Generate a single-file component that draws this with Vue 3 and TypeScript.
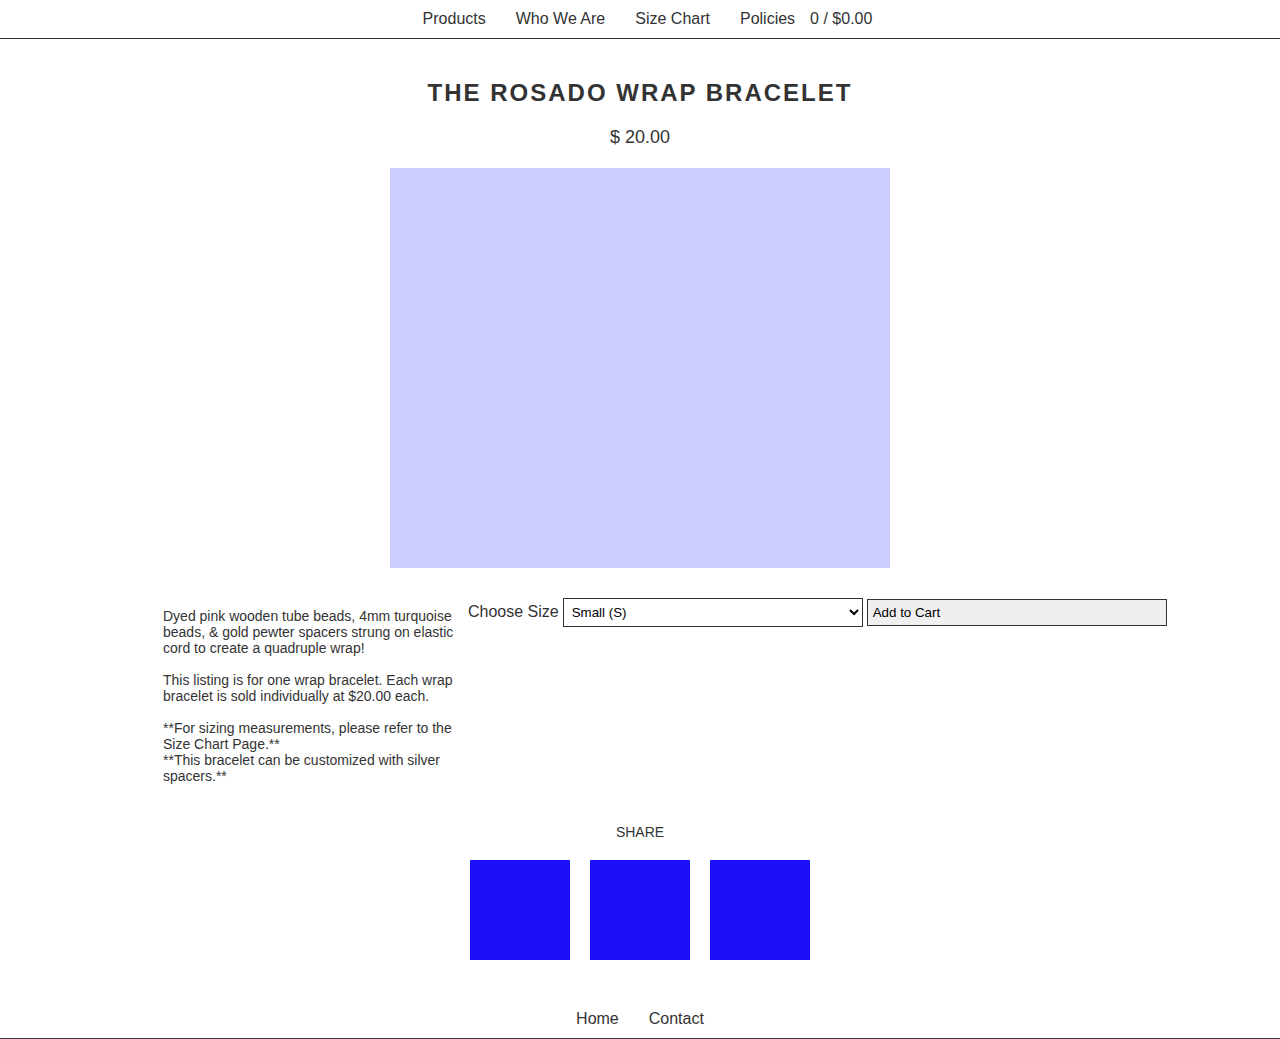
<script setup lang="ts">
import { ref } from 'vue'

interface NavLink {
  label: string
  href: string
}

const mainLinks: NavLink[] = [
  { label: 'Products', href: '#products' },
  { label: 'Who We Are', href: '#about' },
  { label: 'Size Chart', href: '#sizes' },
  { label: 'Policies', href: '#policies' },
]
const footerLinks: NavLink[] = [
  { label: 'Home', href: '#home' },
  { label: 'Contact', href: '#contact' },
]
const networks: string[] = ['Facebook', 'Twitter', 'Pinterest']
const sizes: string[] = ['Small (S)', 'Medium (M)', 'Large (L)']

const size = ref(sizes[0])
const count = ref(0)
const price = 20
</script>

<template>
  <header class="bar">
    <nav class="links">
      <a v-for="link in mainLinks" :key="link.label" :href="link.href">{{ link.label }}</a>
    </nav>
    <span class="cart">{{ count }} / ${{ (count * price).toFixed(2) }}</span>
  </header>

  <main class="product">
    <h1>THE ROSADO WRAP BRACELET</h1>
    <p class="price">$ {{ price.toFixed(2) }}</p>
    <div class="photo"></div>

    <div class="details">
      <div class="description">
        <p>Dyed pink wooden tube beads, 4mm turquoise beads, &amp; gold pewter spacers strung on elastic cord to create a quadruple wrap!</p>
        <p>This listing is for one wrap bracelet. Each wrap bracelet is sold individually at $20.00 each.</p>
        <p>**For sizing measurements, please refer to the Size Chart Page.**<br />**This bracelet can be customized with silver spacers.**</p>
      </div>
      <form class="order" @submit.prevent="count++">
        <label for="size">Choose Size</label>
        <select id="size" v-model="size">
          <option v-for="s in sizes" :key="s">{{ s }}</option>
        </select>
        <button type="submit">Add to Cart</button>
      </form>
    </div>

    <section class="share">
      <h2>SHARE</h2>
      <div class="networks">
        <a v-for="n in networks" :key="n" href="#share" :aria-label="n"></a>
      </div>
    </section>
  </main>

  <footer class="bar">
    <nav class="links">
      <a v-for="link in footerLinks" :key="link.label" :href="link.href">{{ link.label }}</a>
    </nav>
  </footer>
</template>

<style>
body {
  margin: 0;
  background: #fff;
  color: #333;
  font: 16px/18px "Liberation Sans", Arial, sans-serif;
}
</style>

<style scoped>
.bar {
  display: flex;
  justify-content: center;
  padding: 10px 0;
  border-bottom: 1px solid #333;
}

header.bar {
  padding-left: 15px;
}

.links {
  display: flex;
  gap: 30px;
}

.links a {
  color: inherit;
  text-decoration: none;
}

.cart {
  margin-left: 15px;
}

.product {
  display: flex;
  flex-direction: column;
  align-items: center;
}

h1 {
  margin: 40px 0 20px;
  font-size: 24px;
  line-height: 28px;
  letter-spacing: 2px;
}

.price {
  margin: 0 0 20px;
  font-size: 18px;
  line-height: 21px;
}

.photo {
  width: 500px;
  max-width: 100%;
  height: 400px;
  background: #ccf;
}

.details {
  display: flex;
  box-sizing: border-box;
  width: 100%;
  max-width: 1054px;
  margin-top: 30px;
  padding-left: 50px;
}

.description {
  flex: 0 0 295px;
  margin: 10px 10px 0 0;
  font-size: 14px;
  line-height: 16px;
}

.description p {
  margin: 0 0 16px;
}

.order {
  display: flex;
  align-items: baseline;
  align-self: flex-start;
  gap: 4px;
}

label {
  white-space: nowrap;
}

select,
button {
  box-sizing: border-box;
  width: 300px;
  margin: 0;
  border: 1px solid #333;
  border-radius: 0;
  color: #000;
  font-family: "Liberation Sans", Arial, sans-serif;
}

select {
  padding: 5px 4px;
  background: #fff;
}

button {
  padding: 5px;
  background: #efefef;
  text-align: left;
}

.share {
  margin-top: 24px;
  text-align: center;
}

h2 {
  margin: 0 0 20px;
  font-size: 14px;
  font-weight: 400;
  line-height: 16px;
}

.networks {
  display: flex;
  gap: 20px;
  margin-bottom: 40px;
}

.networks a {
  width: 100px;
  height: 100px;
  background: #1b10f7;
}
</style>
